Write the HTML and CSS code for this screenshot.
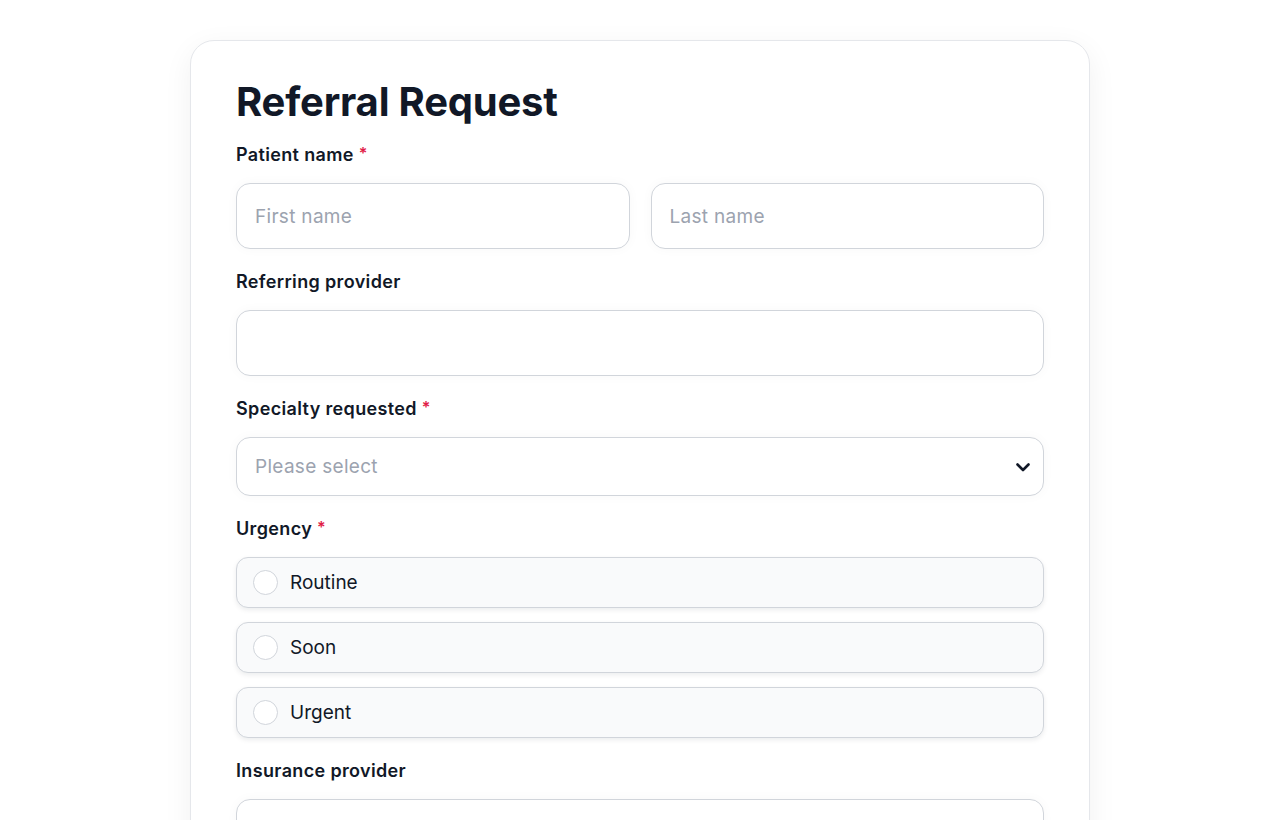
FILE: index.html
```
<!DOCTYPE html>
<html lang="en">
<head>
<meta charset="utf-8">
<title>Referral Request</title>
<link rel="stylesheet" href="styles.css">
</head>
<body>
<main class="card">
  <h1 class="title">Referral Request</h1>

  <div class="field">
    <label class="label">Patient name <span class="req">*</span></label>
    <div class="row2">
      <div class="input"><span class="ph">First name</span></div>
      <div class="input"><span class="ph">Last name</span></div>
    </div>
  </div>

  <div class="field">
    <label class="label">Referring provider</label>
    <div class="input"></div>
  </div>

  <div class="field">
    <label class="label">Specialty requested <span class="req">*</span></label>
    <div class="select">
      <span class="ph">Please select</span>
      <svg class="chev" width="16" height="16" viewBox="0 0 16 16" aria-hidden="true"><path d="M2.5 5.5 L8 11 L13.5 5.5" fill="none" stroke="#111827" stroke-width="2.6" stroke-linecap="round" stroke-linejoin="round"/></svg>
    </div>
  </div>

  <div class="field">
    <label class="label">Urgency <span class="req">*</span></label>
    <div class="options">
      <div class="option"><span class="radio"></span><span class="opt-text">Routine</span></div>
      <div class="option"><span class="radio"></span><span class="opt-text">Soon</span></div>
      <div class="option"><span class="radio"></span><span class="opt-text">Urgent</span></div>
    </div>
  </div>

  <div class="field">
    <label class="label">Insurance provider</label>
    <div class="input"></div>
  </div>
</main>
</body>
</html>
```

FILE: styles.css
```
* { box-sizing: border-box; }
html, body { margin: 0; padding: 0; background: #ffffff; }
body {
  font-family: "Inter", "Noto Sans", sans-serif;
  color: #111827;
  padding-top: 40px;
}
.card {
  width: 900px;
  margin: 0 auto;
  border: 1px solid #e5e7eb;
  border-radius: 24px;
  padding: 33px 45px 60px;
  background: #fff;
  box-shadow: 0 8px 30px rgba(17, 24, 39, 0.06);
}
.title {
  margin: 0 0 13px;
  font-size: 40px;
  line-height: 56px;
  font-weight: 700;
  letter-spacing: -0.2px;
  color: #111827;
}
.field { margin-bottom: 21px; }
.label {
  display: block;
  height: 24px;
  font-size: 18px;
  line-height: 24px;
  font-weight: 600;
  letter-spacing: 0.35px;
  color: #111827;
  margin-bottom: 16px;
}
.req { color: #e11d48; font-size: 16px; line-height: 0; vertical-align: 2px; }
.row2 { display: grid; grid-template-columns: 1fr 1fr; gap: 21px; }
.input {
  height: 66px;
  border: 1px solid #d1d5db;
  border-radius: 14px;
  background: #fff;
  display: flex;
  align-items: center;
  padding: 0 18px;
  box-shadow: 0 0 12px rgba(17, 24, 39, 0.03);
}
.ph { font-size: 19px; letter-spacing: 0.3px; color: #9ca3af; }
.select {
  height: 59px;
  border: 1px solid #d1d5db;
  border-radius: 14px;
  background: #fff;
  display: flex;
  align-items: center;
  justify-content: space-between;
  padding: 0 12px 0 18px;
  box-shadow: 0 0 12px rgba(17, 24, 39, 0.03);
}
.chev { display: block; }
.options { display: flex; flex-direction: column; gap: 14px; }
.option {
  height: 51px;
  border: 1px solid #d1d5db;
  border-radius: 12px;
  background: #f9fafb;
  display: flex;
  align-items: center;
  padding: 0 16px;
  gap: 12px;
  box-shadow: 0 2px 5px rgba(17, 24, 39, 0.08);
}
.radio {
  width: 25px;
  height: 25px;
  border: 1px solid #d1d5db;
  border-radius: 50%;
  background: #fff;
  flex: none;
}
.opt-text { font-size: 19px; color: #111827; }
```
